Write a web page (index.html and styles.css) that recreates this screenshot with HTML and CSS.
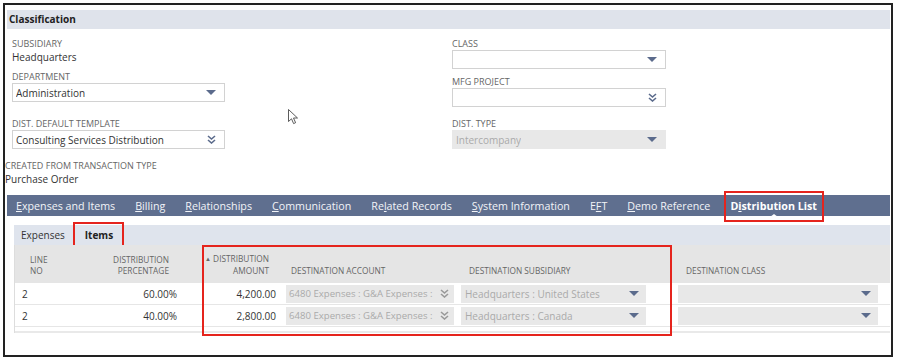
FILE: index.html
```html
<!DOCTYPE html>
<html lang="en">
<head>
    <meta charset="UTF-8">
    <meta name="viewport" content="width=device-width, initial-scale=1.0">
    <title>Journal - Classification</title>
    <link rel="stylesheet" href="styles.css">
</head>
<body>
    <div class="frame">
        <div class="section-head">Classification</div>

        <div class="fields">
            <div class="col">
                <div class="field first">
                    <div class="field-label">Subsidiary</div>
                    <div class="field-value">Headquarters</div>
                </div>
                <div class="field dept">
                    <div class="field-label">Department</div>
                    <div class="select">
                        <span class="select-text">Administration</span>
                        <svg class="arrow" width="10" height="5" viewBox="0 0 10 5"><path d="M0 0H10L5 5Z"/></svg>
                    </div>
                </div>
                <div class="field template">
                    <div class="field-label">Dist. Default Template</div>
                    <div class="select">
                        <span class="select-text">Consulting Services Distribution</span>
                        <svg class="chevrons" width="9" height="9" viewBox="0 0 9 9"><path d="M1 1L4.5 4L8 1M1 5L4.5 8L8 5"/></svg>
                    </div>
                </div>
            </div>
            <div class="col">
                <div class="field first">
                    <div class="field-label">Class</div>
                    <div class="select">
                        <span class="select-text"></span>
                        <svg class="arrow" width="10" height="5" viewBox="0 0 10 5"><path d="M0 0H10L5 5Z"/></svg>
                    </div>
                </div>
                <div class="field dept">
                    <div class="field-label">MFG Project</div>
                    <div class="select">
                        <span class="select-text"></span>
                        <svg class="chevrons" width="9" height="9" viewBox="0 0 9 9"><path d="M1 1L4.5 4L8 1M1 5L4.5 8L8 5"/></svg>
                    </div>
                </div>
                <div class="field dist-type">
                    <div class="field-label">Dist. Type</div>
                    <div class="select disabled">
                        <span class="select-text">Intercompany</span>
                        <svg class="arrow" width="10" height="5" viewBox="0 0 10 5"><path d="M0 0H10L5 5Z"/></svg>
                    </div>
                </div>
            </div>
        </div>

        <div class="created">
            <div class="field-label">Created From Transaction Type</div>
            <div class="field-value">Purchase Order</div>
        </div>

        <div class="tabs">
            <span class="tab"><u>E</u>xpenses and Items</span>
            <span class="tab"><u>B</u>illing</span>
            <span class="tab"><u>R</u>elationships</span>
            <span class="tab"><u>C</u>ommunication</span>
            <span class="tab">Re<u>l</u>ated Records</span>
            <span class="tab"><u>S</u>ystem Information</span>
            <span class="tab">E<u>F</u>T</span>
            <span class="tab"><u>D</u>emo Reference</span>
            <span class="tab active">D<u>i</u>stribution List</span>
        </div>

        <div class="subtabs">
            <span class="subtab">Expenses</span>
            <span class="subtab active">Items</span>
        </div>

        <div class="grid">
            <div class="row head">
                <div class="cell c-line"><span>Line<br>No</span></div>
                <div class="cell c-pct"><span>Distribution<br>Percentage</span></div>
                <div class="cell c-amt"><span><span class="sort">&#9650;</span> Distribution<br>Amount</span></div>
                <div class="cell c-acct"><span>Destination Account</span></div>
                <div class="cell c-sub"><span>Destination Subsidiary</span></div>
                <div class="cell c-cls"><span>Destination Class</span></div>
            </div>
            <div class="row">
                <div class="cell c-line">2</div>
                <div class="cell c-pct">60.00%</div>
                <div class="cell c-amt">4,200.00</div>
                <div class="cell c-acct">
                    <div class="select disabled acct">
                        <span class="select-text">6480 Expenses : G&amp;A Expenses :</span>
                        <svg class="chevrons grey" width="9" height="9" viewBox="0 0 9 9"><path d="M1 1L4.5 4L8 1M1 5L4.5 8L8 5"/></svg>
                    </div>
                </div>
                <div class="cell c-sub">
                    <div class="select disabled sub">
                        <span class="select-text">Headquarters : United States</span>
                        <svg class="arrow" width="10" height="5" viewBox="0 0 10 5"><path d="M0 0H10L5 5Z"/></svg>
                    </div>
                </div>
                <div class="cell c-cls">
                    <div class="select disabled cls">
                        <span class="select-text"></span>
                        <svg class="arrow" width="10" height="5" viewBox="0 0 10 5"><path d="M0 0H10L5 5Z"/></svg>
                    </div>
                </div>
            </div>
            <div class="row">
                <div class="cell c-line">2</div>
                <div class="cell c-pct">40.00%</div>
                <div class="cell c-amt">2,800.00</div>
                <div class="cell c-acct">
                    <div class="select disabled acct">
                        <span class="select-text">6480 Expenses : G&amp;A Expenses :</span>
                        <svg class="chevrons grey" width="9" height="9" viewBox="0 0 9 9"><path d="M1 1L4.5 4L8 1M1 5L4.5 8L8 5"/></svg>
                    </div>
                </div>
                <div class="cell c-sub">
                    <div class="select disabled sub">
                        <span class="select-text">Headquarters : Canada</span>
                        <svg class="arrow" width="10" height="5" viewBox="0 0 10 5"><path d="M0 0H10L5 5Z"/></svg>
                    </div>
                </div>
                <div class="cell c-cls">
                    <div class="select disabled cls">
                        <span class="select-text"></span>
                        <svg class="arrow" width="10" height="5" viewBox="0 0 10 5"><path d="M0 0H10L5 5Z"/></svg>
                    </div>
                </div>
            </div>
            <div class="grid-foot"></div>
            <div class="callout"></div>
        </div>

        <svg class="cursor" width="11" height="16" viewBox="0 0 11 16">
            <path d="M0.5 0.5V12.5L3.5 9.8L5.6 14.6L7.6 13.7L5.5 9H9.5Z"/>
        </svg>
    </div>
</body>
</html>
```

FILE: styles.css
```css
body {
    margin: 0;
    background-color: #fff;
    font-family: 'Open Sans', 'Liberation Sans', sans-serif;
    color: #333;
}

.frame {
    position: relative;
    margin: 3px 0 0 3px;
    width: 886px;
    height: 350px;
    border: 2px solid #222;
    overflow: hidden;
}

.section-head {
    margin: 5px 1px 0 2px;
    height: 19px;
    line-height: 19px;
    padding-left: 2px;
    background-color: #dfe3eb;
    font-size: 10px;
    font-weight: bold;
    color: #222;
}

.fields {
    display: grid;
    grid-template-columns: 213px 214px;
    column-gap: 227px;
    padding-left: 7px;
}

.field.first {
    margin-top: 8px;
}

.field.dept {
    margin-top: 6px;
}

.field.template {
    margin-top: 15px;
}

.field.dist-type {
    margin-top: 10px;
}

.field-label {
    font-size: 9px;
    line-height: 13px;
    color: #666;
    text-transform: uppercase;
}

.field-value {
    font-size: 10px;
    line-height: 14px;
    color: #333;
}

.select {
    display: flex;
    align-items: center;
    justify-content: space-between;
    gap: 4px;
    box-sizing: border-box;
    height: 19px;
    padding: 0 8px 0 3px;
    border: 1px solid #d2d2d2;
    background-color: #fff;
    font-size: 10px;
    color: #333;
}

.select-text {
    min-width: 0;
    white-space: nowrap;
    overflow: hidden;
}

.select.disabled {
    border-color: #e8e8e8;
    background-color: #e8e8e8;
    color: #aaa;
}

.arrow {
    flex: none;
    fill: #5b6b8c;
}

.chevrons {
    flex: none;
    fill: none;
    stroke: #5b6b8c;
    stroke-width: 1.6;
}

.chevrons.grey {
    stroke: #999;
}

.created {
    margin-top: 10px;
}

.tabs {
    display: flex;
    gap: 20px;
    margin: 9px 1px 0 2px;
    height: 21px;
    padding-left: 9px;
    background-color: #5f6f8f;
    align-items: center;
}

.tab {
    position: relative;
    font-size: 10.7px;
    color: #f2f4f8;
    white-space: nowrap;
}

.tab.active {
    font-weight: bold;
    color: #fff;
}

.tab.active::before {
    content: "";
    position: absolute;
    left: -6px;
    right: -7px;
    top: -8px;
    bottom: -9px;
    border: 2px solid #e5241d;
}

.tab.active::after,
.subtab.active::after {
    content: "";
    position: absolute;
    left: 50%;
    margin-left: -4px;
    border-left: 4px solid transparent;
    border-right: 4px solid transparent;
    border-bottom: 3px solid #fff;
}

.tab.active::after {
    bottom: -4px;
}

.subtabs {
    display: flex;
    gap: 20px;
    align-items: center;
    margin: 9px 1px 0 9px;
    height: 20px;
    padding-left: 7px;
    background-color: #dfe4ed;
}

.subtab {
    position: relative;
    font-size: 10px;
    color: #333;
}

.subtab.active {
    font-weight: bold;
    color: #222;
}

.subtab.active::before {
    content: "";
    position: absolute;
    left: -12px;
    right: -11px;
    top: -6px;
    bottom: -6px;
    border: 2px solid #e5241d;
}

.subtab.active::after {
    bottom: -6px;
}

.grid {
    position: relative;
    margin: 0 1px 0 9px;
    border-left: 1px solid #ddd;
}

.row {
    display: grid;
    grid-template-columns: 86px 85px 95px 175px 215px 220px;
    height: 21px;
    border-bottom: 1px solid #e6e6e6;
    font-size: 10px;
    color: #333;
}

.row.head {
    height: 38px;
    border-bottom: none;
    background-color: #e5e5e5;
    font-size: 8.3px;
    line-height: 11px;
    color: #666;
    text-transform: uppercase;
}

.cell {
    display: flex;
    align-items: center;
    white-space: nowrap;
    min-width: 0;
}

.head .cell {
    align-items: flex-end;
    padding-bottom: 7px;
}

.c-line {
    padding-left: 7px;
}

.head .c-line {
    padding-left: 15px;
}

.c-pct,
.c-amt {
    justify-content: flex-end;
    text-align: right;
}

.c-pct {
    padding-right: 9px;
}

.head .c-pct {
    padding-right: 17px;
}

.c-amt {
    padding-right: 5px;
}

.head .c-amt {
    padding-right: 12px;
}

.sort {
    font-size: 6px;
    vertical-align: 1px;
}

.c-acct {
    padding-left: 5px;
}

.head .c-acct {
    padding-left: 10px;
}

.c-sub {
    padding-left: 5px;
}

.head .c-sub {
    padding-left: 13px;
}

.c-cls {
    padding-left: 7px;
}

.head .c-cls {
    padding-left: 15px;
}

.select.acct {
    width: 168px;
    height: 18px;
    gap: 3px;
    padding: 0 4px 0 2px;
    font-size: 9.6px;
}

.select.sub {
    width: 185px;
    height: 18px;
    padding-right: 6px;
}

.select.cls {
    width: 200px;
    height: 18px;
    padding-right: 6px;
}

.grid-foot {
    height: 4px;
    border-bottom: 2px solid #e9e9e9;
}

.callout {
    position: absolute;
    left: 187px;
    top: 0;
    width: 470px;
    height: 91px;
    box-sizing: border-box;
    border: 2px solid #e5241d;
}

.cursor {
    position: absolute;
    left: 283px;
    top: 104px;
    fill: #fff;
    stroke: #333;
    stroke-width: 0.8;
}
```
